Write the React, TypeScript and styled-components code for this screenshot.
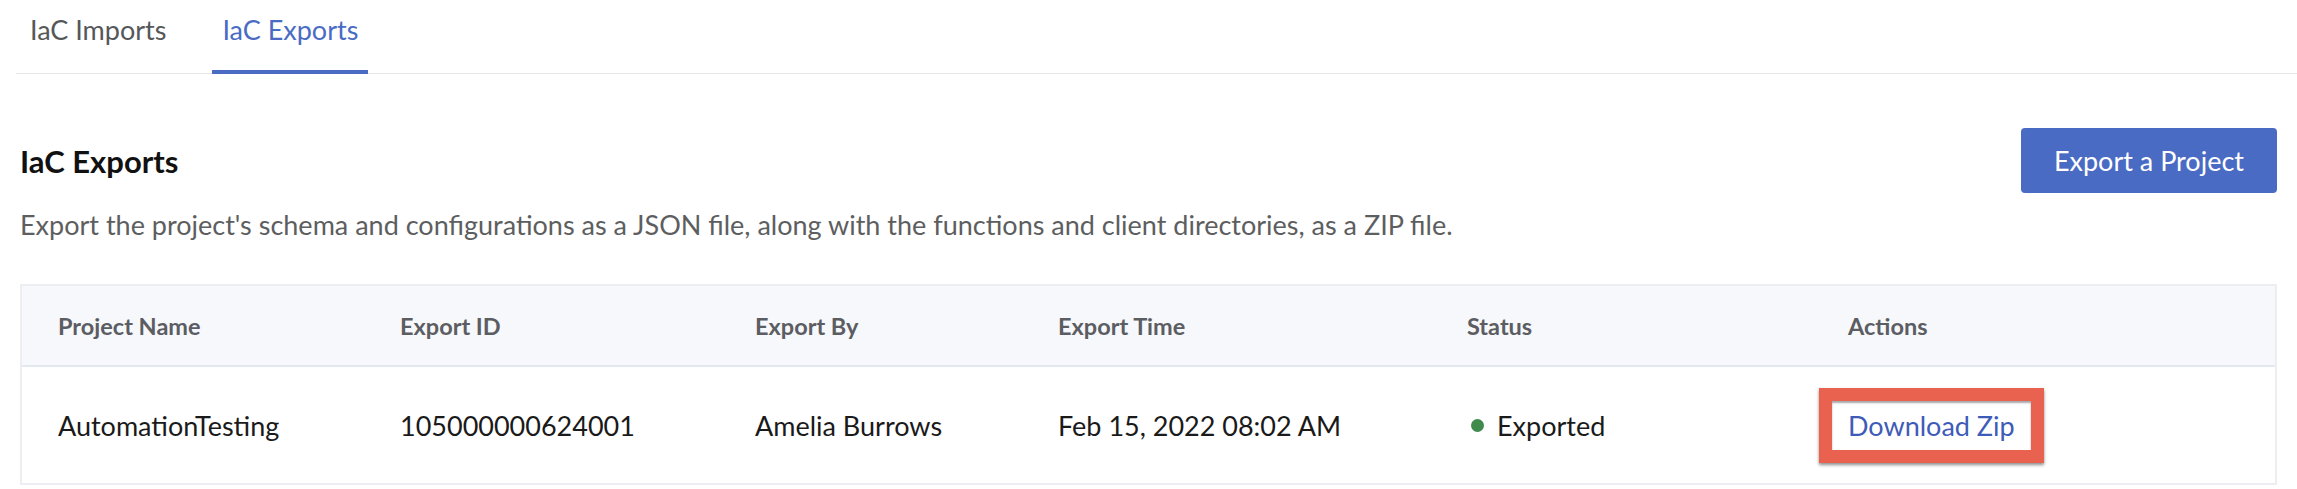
import React from "react";
import styled, { createGlobalStyle } from "styled-components";

const GlobalStyle = createGlobalStyle`
  html, body {
    margin: 0;
    padding: 0;
    background: #fff;
  }

  body {
    font-family: Lato, "Open Sans", sans-serif;
    color: #1c1c1c;
  }
`;

const Page = styled.div`
  padding: 0 20px;
`;

const TabBar = styled.nav`
  display: flex;
  gap: 36px;
  margin: 0 -20px 0 -4px;
  padding-left: 4px;
  border-bottom: 1px solid #e4e6e9;
`;

const Tab = styled.div<{ $active?: boolean }>`
  padding: 13px 10px 23px;
  font-size: 27px;
  line-height: 34px;
  color: ${(p) => (p.$active ? "#4a6bc4" : "#555759")};
  border-bottom: 4px solid ${(p) => (p.$active ? "#4a6bc4" : "transparent")};
  margin-bottom: -1px;
  cursor: pointer;
`;

const HeaderRow = styled.div`
  display: flex;
  align-items: center;
  justify-content: space-between;
  margin-top: 54px;
`;

const Title = styled.h2`
  margin: 0;
  font-size: 31px;
  line-height: 36px;
  font-weight: 700;
  color: #111;
`;

const PrimaryButton = styled.button`
  height: 65px;
  padding: 0 33px;
  border: none;
  border-radius: 4px;
  background: #4a6bc4;
  color: #fff;
  font-family: inherit;
  font-size: 27px;
  cursor: pointer;
`;

const Description = styled.p`
  margin: 16px 0 0;
  font-size: 27px;
  line-height: 32px;
  color: #5d5e60;
`;

const Table = styled.div`
  margin-top: 43px;
  border: 2px solid #eceef1;
  border-bottom: none;
`;

const Row = styled.div<{ $head?: boolean }>`
  display: grid;
  grid-template-columns: 342px 355px 303px 409px 381px 1fr;
  align-items: center;
  height: ${(p) => (p.$head ? "79px" : "116px")};
  background: ${(p) => (p.$head ? "#f6f8fb" : "#fff")};
  border-bottom: 2px solid ${(p) => (p.$head ? "#e3e8ee" : "#eceef1")};
`;

const HeadCell = styled.div`
  padding-left: 36px;
  font-size: 23.5px;
  font-weight: 700;
  color: #5c5d63;
`;

const Cell = styled.div`
  display: flex;
  align-items: center;
  padding-left: 36px;
  font-size: 27px;
  color: #1a1a1a;
`;

const StatusDot = styled.span`
  width: 13px;
  height: 13px;
  margin: 0 13px 0 4px;
  border-radius: 50%;
  background: #3f8a4c;
`;

const Highlight = styled.span`
  display: inline-flex;
  align-items: center;
  height: 49px;
  margin-left: -29px;
  padding: 0 16px;
  border: 13px solid #e8624f;
  box-shadow: 0 2px 3px rgba(0, 0, 0, 0.45), inset 0 2px 2px rgba(0, 0, 0, 0.35);
`;

const Link = styled.a`
  color: #3e5bb8;
  text-decoration: none;
  font-size: 27px;
  cursor: pointer;
`;

const columns = ["Project Name", "Export ID", "Export By", "Export Time", "Status", "Actions"];

const exportsData = [
  {
    project: "AutomationTesting",
    id: "105000000624001",
    by: "Amelia Burrows",
    time: "Feb 15, 2022 08:02 AM",
    status: "Exported",
  },
];

const App = () => {
  return (
    <>
      <GlobalStyle />
      <Page>
        <TabBar>
          <Tab>IaC Imports</Tab>
          <Tab $active>IaC Exports</Tab>
        </TabBar>

        <HeaderRow>
          <Title>IaC Exports</Title>
          <PrimaryButton>Export a Project</PrimaryButton>
        </HeaderRow>
        <Description>
          Export the project's schema and configurations as a JSON file, along with the functions and client
          directories, as a ZIP file.
        </Description>

        <Table>
          <Row $head>
            {columns.map((c) => (
              <HeadCell key={c}>{c}</HeadCell>
            ))}
          </Row>
          {exportsData.map((row) => (
            <Row key={row.id}>
              <Cell>{row.project}</Cell>
              <Cell>{row.id}</Cell>
              <Cell>{row.by}</Cell>
              <Cell>{row.time}</Cell>
              <Cell>
                <StatusDot />
                {row.status}
              </Cell>
              <Cell>
                <Highlight>
                  <Link>Download Zip</Link>
                </Highlight>
              </Cell>
            </Row>
          ))}
        </Table>
      </Page>
    </>
  );
};

export default App;
